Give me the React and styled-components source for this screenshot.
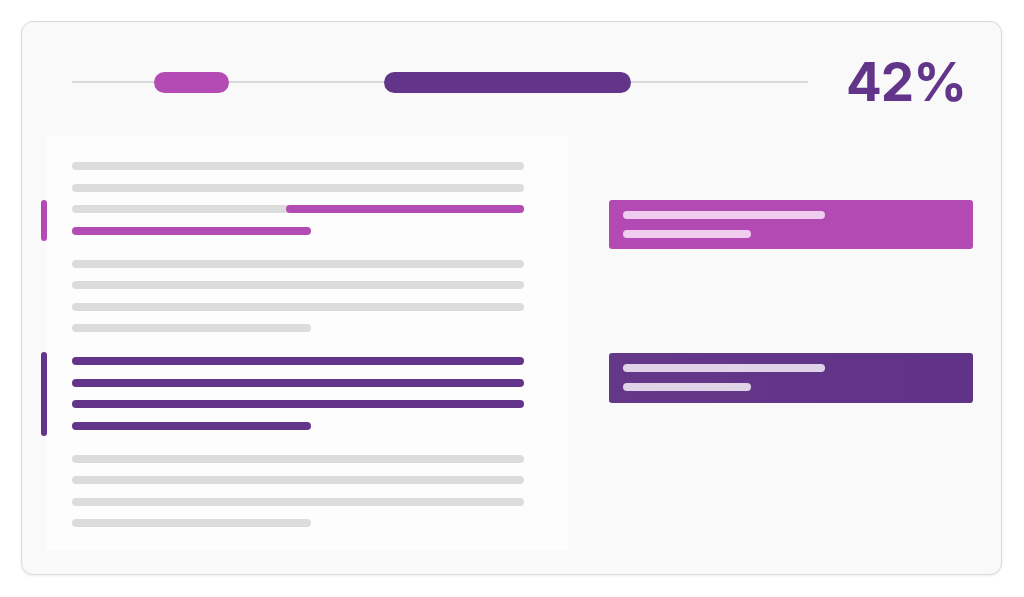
import React from 'react';
import styled, { createGlobalStyle } from 'styled-components';

const GlobalStyle = createGlobalStyle`
    html, body {
        margin: 0;
        padding: 0;
        background: #ffffff;
        font-family: "Inter", "Liberation Sans", sans-serif;
    }
    * { box-sizing: border-box; }
`

const PINK = '#b44ab3';
const PURPLE = '#63358a';
const GRAY = '#dcdcdc';

const Page = styled.div`
    width: 1024px;
    height: 597px;
    padding: 21px 22px 22px 21px;
`

const Card = styled.div`
    width: 981px;
    height: 554px;
    background: #f9f9f9;
    border: 1.5px solid #dadada;
    border-radius: 12px;
    box-shadow: 0 1px 3px rgba(0,0,0,0.08);
    padding: 0 28px 0 24px;
    display: flex;
    flex-direction: column;
`

const Header = styled.div`
    height: 114px;
    padding: 6px 0 0 26px;
    display: flex;
    align-items: center;
    gap: 38px;
`

const Slider = styled.div`
    position: relative;
    width: 736px;
    height: 21px;
    &::before{
        content: '';
        position: absolute;
        left: 0;
        right: 0;
        top: 50%;
        height: 2px;
        margin-top: -1px;
        background: #dadada;
    }
`

const Thumb = styled.div`
    position: absolute;
    top: 0;
    height: 21px;
    left: ${props => props.left}px;
    width: ${props => props.width}px;
    border-radius: 11px;
    background: ${props => props.color};
`

const Percent = styled.div`
    font-size: 53px;
    font-weight: 700;
    color: ${PURPLE};
    line-height: 1;
    letter-spacing: -1px;
    padding-top: 0;
`

const Body = styled.div`
    display: flex;
    gap: 41px;
`

const Doc = styled.div`
    width: 522px;
    height: 415px;
    background: #fdfdfd;
    padding: 26px 44px 0 26px;
    display: flex;
    flex-direction: column;
    gap: 25px;
`

const Group = styled.div`
    display: flex;
    flex-direction: column;
    gap: 13.5px;
`

const Marked = styled.div`
    display: flex;
    gap: 25px;
    margin-left: -31px;
`

const Marker = styled.div`
    width: 6px;
    flex: none;
    margin: -5px 0 -6px;
    border-radius: 3px;
    background: ${props => props.color};
`

const Lines = styled.div`
    flex: 1;
    display: flex;
    flex-direction: column;
    gap: 13.5px;
`

const Line = styled.div`
    position: relative;
    height: 8px;
    border-radius: 4px;
    width: ${props => props.short ? '239px' : '452px'};
    background: ${props => props.color || GRAY};
`

const Highlight = styled.div`
    position: absolute;
    top: 0;
    right: 0;
    height: 8px;
    width: ${props => props.width}px;
    border-radius: 4px;
    background: ${props => props.color};
`

const Side = styled.div`
    width: 365px;
    padding-top: 64px;
    display: flex;
    flex-direction: column;
    gap: 104px;
`

const Note = styled.div`
    height: ${props => props.height}px;
    border-radius: 3px;
    padding: 11px 14px;
    display: flex;
    flex-direction: column;
    gap: 11px;
    background: linear-gradient(90deg, ${props => props.from}, ${props => props.to});
`

const NoteLine = styled.div`
    height: 8px;
    border-radius: 4px;
    width: ${props => props.width}px;
    background: ${props => props.color};
`

const Plain = () => (
    <Group>
        <Line />
        <Line />
        <Line />
        <Line short />
    </Group>
)

const App = () => {
    return (
        <Page>
            <GlobalStyle />
            <Card>
                <Header>
                    <Slider>
                        <Thumb left={82} width={75} color={PINK} />
                        <Thumb left={312} width={247} color={PURPLE} />
                    </Slider>
                    <Percent>42%</Percent>
                </Header>
                <Body>
                    <Doc>
                        <Group>
                            <Line />
                            <Line />
                            <Marked>
                                <Marker color={PINK} />
                                <Lines>
                                    <Line>
                                        <Highlight width={238} color={PINK} />
                                    </Line>
                                    <Line short color={PINK} />
                                </Lines>
                            </Marked>
                        </Group>
                        <Plain />
                        <Marked>
                            <Marker color={PURPLE} />
                            <Lines>
                                <Line color={PURPLE} />
                                <Line color={PURPLE} />
                                <Line color={PURPLE} />
                                <Line short color={PURPLE} />
                            </Lines>
                        </Marked>
                        <Plain />
                    </Doc>
                    <Side>
                        <Note height={49} from="#b34ab3" to="#b44ab4">
                            <NoteLine width={202} color="#f0cdee" />
                            <NoteLine width={128} color="#f0cdee" />
                        </Note>
                        <Note height={50} from="#653789" to="#613387">
                            <NoteLine width={202} color="#dfd3e8" />
                            <NoteLine width={128} color="#dfd3e8" />
                        </Note>
                    </Side>
                </Body>
            </Card>
        </Page>
    )
}

export default App
